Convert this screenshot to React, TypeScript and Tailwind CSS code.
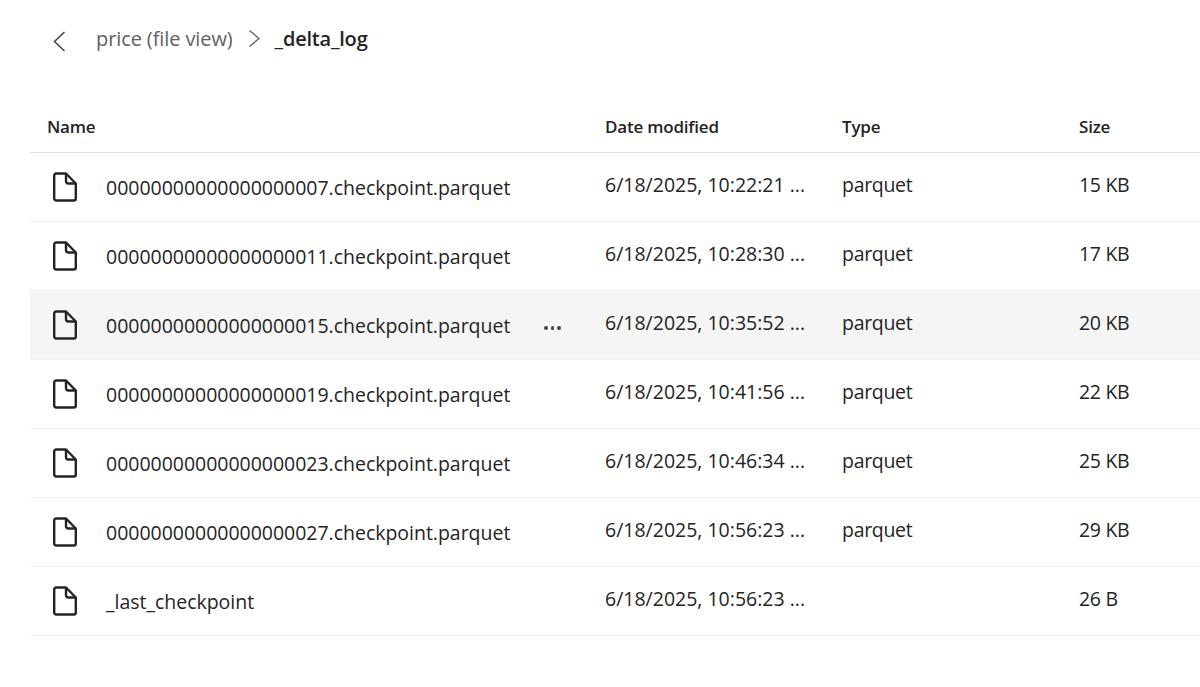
const files = [
  { name: "00000000000000000007.checkpoint.parquet", date: "6/18/2025, 10:22:21 ...", type: "parquet", size: "15 KB" },
  { name: "00000000000000000011.checkpoint.parquet", date: "6/18/2025, 10:28:30 ...", type: "parquet", size: "17 KB" },
  { name: "00000000000000000015.checkpoint.parquet", date: "6/18/2025, 10:35:52 ...", type: "parquet", size: "20 KB", hover: true },
  { name: "00000000000000000019.checkpoint.parquet", date: "6/18/2025, 10:41:56 ...", type: "parquet", size: "22 KB" },
  { name: "00000000000000000023.checkpoint.parquet", date: "6/18/2025, 10:46:34 ...", type: "parquet", size: "25 KB" },
  { name: "00000000000000000027.checkpoint.parquet", date: "6/18/2025, 10:56:23 ...", type: "parquet", size: "29 KB" },
  { name: "_last_checkpoint", date: "6/18/2025, 10:56:23 ...", type: "", size: "26 B" },
];

const FileIcon = () => (
  <svg width="26" height="30" viewBox="0 0 26 30" fill="none" stroke="#242424" strokeWidth="2.4" strokeLinejoin="round" className="shrink-0">
    <path d="M2.200 3.500a2 2 0 0 1 2-2H14l9.800 10V26.500a2 2 0 0 1-2 2H4.200a2 2 0 0 1-2-2z" />
    <path d="M14 1.500V9a2.500 2.500 0 0 0 2.500 2.500h7.300" />
  </svg>
);

export default function App() {
  return (
    <div className="w-[1200px] h-[687px] overflow-hidden bg-white text-[#242424] font-['Open_Sans','Liberation_Sans',sans-serif]">
      {/* Breadcrumb */}
      <div className="flex items-center h-[77px] pl-[52px]">
        <svg width="16" height="24" viewBox="0 0 16 24" fill="none" stroke="#424242" strokeWidth="1.500" className="mt-[5px]">
          <path d="M12.500 3 2.500 12.500l10 9.500" />
        </svg>
        <span className="ml-[28px] text-[20px] tracking-[-0.1px] text-[#616161]">price (file view)</span>
        <svg width="14" height="20" viewBox="0 0 14 20" fill="none" stroke="#616161" strokeWidth="1.300" className="ml-[14px]">
          <path d="M2.500 1.500 12 9.500 2.500 17.500" />
        </svg>
        <span className="ml-[14px] text-[20px] font-semibold tracking-[-0.2px]">_delta_log</span>
      </div>

      <div className="ml-[30px]">
        {/* Header */}
        <div className="grid grid-cols-[575px_237px_237px_1fr] items-center h-[76px] pt-[25px] border-b border-[#e0e0e0] text-[17px] font-semibold tracking-[-0.2px]">
          <div className="pl-[17px]">Name</div>
          <div>Date modified</div>
          <div>Type</div>
          <div>Size</div>
        </div>

        {/* Rows */}
        {files.map((file) => (
          <div
            key={file.name}
            className={`grid grid-cols-[575px_237px_237px_1fr] items-center h-[69px] border-b border-[#f0f0f0] text-[19.500px] tracking-[-0.3px] ${file.hover ? "bg-[#f5f5f5]" : ""}`}
          >
            <div className="relative flex items-center pl-[22px]">
              <FileIcon />
              <span className="ml-[28px] mt-[2px] whitespace-nowrap tracking-[-0.02px]">{file.name}</span>
              {file.hover && (
                <div className="absolute left-[514px] top-[17px] flex gap-[3px]">
                  <span className="w-[3.500px] h-[3.500px] rounded-full bg-[#424242]" />
                  <span className="w-[3.500px] h-[3.500px] rounded-full bg-[#424242]" />
                  <span className="w-[3.500px] h-[3.500px] rounded-full bg-[#424242]" />
                </div>
              )}
            </div>
            <div className="mb-[4px] whitespace-nowrap tracking-normal">{file.date}</div>
            <div className="mb-[4px]">{file.type}</div>
            <div className="mb-[4px]">{file.size}</div>
          </div>
        ))}
      </div>
    </div>
  );
}
